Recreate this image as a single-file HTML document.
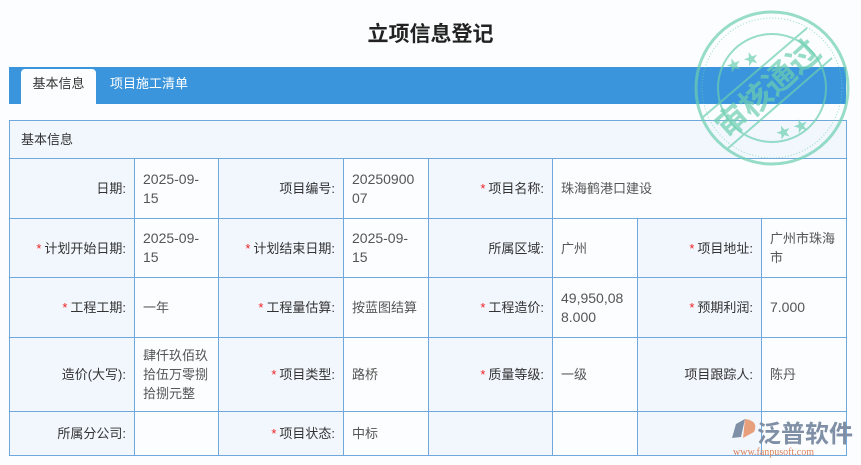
<!DOCTYPE html>
<html><head><meta charset="utf-8"><style>
body{margin:0;width:861px;height:465px;background:#fcfdfe;font-family:"Liberation Sans","Noto Sans CJK SC",sans-serif;position:relative;overflow:hidden}
h1{position:absolute;top:20px;left:0;width:861px;text-align:center;margin:0;font-size:21px;font-weight:bold;color:#222;line-height:30px}
.bar{position:absolute;left:9px;top:67px;width:837px;height:37px;background:#3a95dc}
.tab1{position:absolute;left:12px;top:2px;width:75px;height:35px;background:#fcfdfe;border-radius:4px 4px 0 0;font-size:13px;color:#333;line-height:30px;text-align:center}
.tab2{position:absolute;left:101px;top:2px;font-size:13px;color:#fff;line-height:30px}
table{position:absolute;left:9px;top:120px;border-collapse:collapse;table-layout:fixed;width:838px}
td{border:1px solid #6fa8dc;font-size:13px;padding:0 8px;vertical-align:middle;line-height:19px;word-break:normal;overflow-wrap:anywhere}
td.l{background:#f2f7fe;text-align:right;color:#333}
td.v{background:#fcfdfe;color:#555;font-size:14px}
td.h{background:#f2f7fe;color:#333;padding-left:11px}
.s{color:#e22;margin-right:3px}
</style></head><body>
<h1>立项信息登记</h1>
<div class="bar"><div class="tab1">基本信息</div><div class="tab2">项目施工清单</div></div>
<table>
<colgroup><col style="width:125px"><col style="width:84px"><col style="width:125px"><col style="width:85px"><col style="width:124px"><col style="width:85px"><col style="width:124px"><col style="width:85px"></colgroup>
<tr style="height:38px"><td class="h" colspan="8">基本信息</td></tr>
<tr style="height:60px"><td class="l">日期:</td><td class="v">2025-09-15</td><td class="l">项目编号:</td><td class="v">2025090007</td><td class="l"><span class="s">*</span>项目名称:</td><td class="v" colspan="3" style="font-size:13px">珠海鹤港口建设</td></tr>
<tr style="height:59px"><td class="l"><span class="s">*</span>计划开始日期:</td><td class="v">2025-09-15</td><td class="l"><span class="s">*</span>计划结束日期:</td><td class="v">2025-09-15</td><td class="l">所属区域:</td><td class="v" style="font-size:13px">广州</td><td class="l"><span class="s">*</span>项目地址:</td><td class="v" style="font-size:13px">广州市珠海市</td></tr>
<tr style="height:60px"><td class="l"><span class="s">*</span>工程工期:</td><td class="v" style="font-size:13px">一年</td><td class="l"><span class="s">*</span>工程量估算:</td><td class="v" style="font-size:13px">按蓝图结算</td><td class="l"><span class="s">*</span>工程造价:</td><td class="v">49,950,088.000</td><td class="l"><span class="s">*</span>预期利润:</td><td class="v">7.000</td></tr>
<tr style="height:74px"><td class="l">造价(大写):</td><td class="v" style="font-size:13px">肆仟玖佰玖拾伍万零捌拾捌元整</td><td class="l"><span class="s">*</span>项目类型:</td><td class="v" style="font-size:13px">路桥</td><td class="l"><span class="s">*</span>质量等级:</td><td class="v" style="font-size:13px">一级</td><td class="l">项目跟踪人:</td><td class="v" style="font-size:13px">陈丹</td></tr>
<tr style="height:44px"><td class="l">所属分公司:</td><td class="v"></td><td class="l"><span class="s">*</span>项目状态:</td><td class="v" style="font-size:13px">中标</td><td class="l"></td><td class="v"></td><td class="l"></td><td class="v"></td></tr>
</table>
<svg style="position:absolute;left:0;top:0" width="861" height="465">
<g opacity="0.7" fill="none" stroke="#6ccfb0">
<circle cx="772" cy="88" r="76" stroke-width="3"/>
<circle cx="772" cy="88" r="70" stroke-width="1" stroke-dasharray="1 2"/>
<circle cx="772" cy="88" r="54" stroke-width="2"/>
<line x1="702" y1="118" x2="807" y2="28" stroke-width="2"/>
<line x1="726" y1="150" x2="832" y2="58" stroke-width="2"/>
</g>
<g opacity="0.7" fill="#6ccfb0" font-family="Noto Sans CJK SC,sans-serif" font-weight="bold" font-size="32">
<text x="768" y="100" text-anchor="middle" transform="rotate(-42 768 89)">审核通过</text>
<text x="725" y="68" font-size="15" transform="rotate(-20 740 60)">★ ★</text>
<text x="775" y="135" font-size="15" transform="rotate(-20 790 128)">★ ★</text>
</g>
<g>
<path d="M736 424 L745 419 L741 437 L732 438 Z" fill="#7f8fa6"/>
<path d="M745 419 Q759 421 754 432 L743 438 Z" fill="#e8a07c"/>
<text x="757" y="442" font-size="24" fill="#7f8fa6" font-family="Noto Sans CJK SC,sans-serif" font-weight="bold">泛普软件</text>
<text x="733" y="455" font-size="10" fill="#d9825a" font-family="Liberation Serif,serif">www.fanpusoft.com</text>
</g>
</svg>
</body></html>
